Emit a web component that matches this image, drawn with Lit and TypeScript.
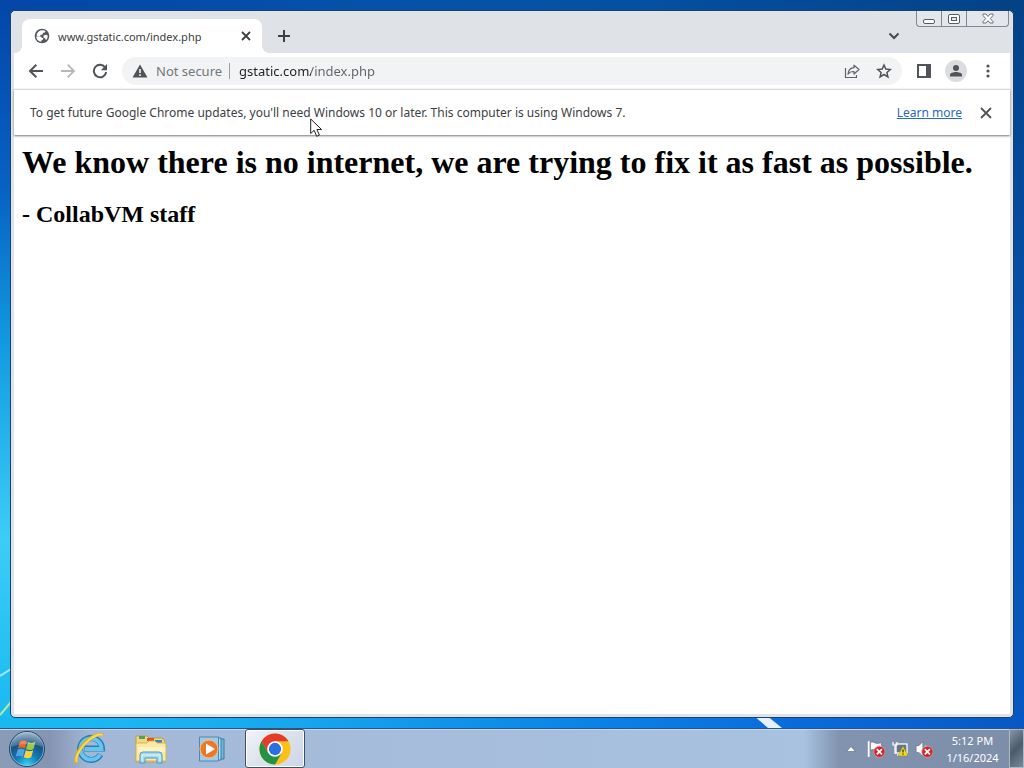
import { LitElement, html, css, svg } from "lit";
import { customElement } from "lit/decorators.js";

@customElement("browser-window")
class BrowserWindow extends LitElement {
  static styles = css`
    :host { flex: 1; display: flex; flex-direction: column; min-height: 0; box-sizing: border-box;
      background: #dfe3e8; border: 1px solid #17436f; border-radius: 5px; padding: 0 3px 3px;
      font-family: "Noto Sans", "Open Sans", sans-serif; color: #3c4043; }
    * { box-sizing: border-box; }
    svg { display: block; flex: none; }
    button { border: 0; padding: 0; margin: 0; background: none; color: #505357; display: grid; place-items: center; flex: none; }
    .strip { display: flex; height: 42px; background: #dfe2e7; padding-left: 8px; }
    .tab { align-self: flex-end; width: 240px; height: 34px; display: flex; align-items: center; gap: 8px;
      padding: 0 8px 0 12px; background: #fff; border-radius: 8px 8px 0 0; font-size: 11px; position: relative; }
    .tab::before, .tab::after { content: ""; position: absolute; bottom: 0; width: 8px; height: 8px; }
    .tab::before { left: -8px; background: radial-gradient(circle at 0 0, #dfe2e7 8px, #fff 8px); }
    .tab::after { right: -8px; background: radial-gradient(circle at 100% 0, #dfe2e7 8px, #fff 8px); }
    .title { flex: 1; white-space: nowrap; }
    .new { width: 28px; height: 28px; margin: 11px 0 0 8px; }
    .list { width: 24px; height: 24px; margin: 13px 10px 0 auto; }
    .caption { display: flex; height: 16px; margin-right: 1px; border: 1px solid #83888f; border-top: 0; border-radius: 0 0 4px 4px; background: #e3e6ea; }
    .caption button { height: 15px; width: 25px; border-right: 1px solid #83888f; }
    .caption button:last-child { width: 41px; border: 0; }
    .toolbar { display: flex; align-items: center; height: 36px; background: #fff; padding: 0 6px; }
    .tool { width: 32px; height: 32px; }
    .omni { flex: 1; display: flex; align-items: center; height: 28px; margin: 0 6px; border-radius: 14px; background: #f1f3f4; padding: 0 2px 0 10px; font-size: 13px; color: #5f6368; }
    .secure { margin-left: 8px; white-space: nowrap; color: #74777b; }
    .rule { width: 1px; height: 16px; background: #9aa0a6; margin: 0 9px 0 7px; }
    .url { flex: 1; min-width: 0; border: 0; padding: 0; outline: 0; font: inherit; color: transparent;
      background: linear-gradient(90deg, #202124 72px, #5f6368 72px); -webkit-background-clip: text; background-clip: text; }
    .avatar { width: 22px; height: 22px; border-radius: 50%; background: #dadce0; }
    .info { display: flex; align-items: center; height: 46px; background: #fff; border-top: 1px solid #d5d7da; padding: 0 13px 0 16px; font-size: 12px;
      box-shadow: 0 1px 2px #777; z-index: 1; flex: none; }
    .info a { margin-left: auto; margin-right: 13px; color: #2a69c4; }
    .page { flex: 1; background: #fff; padding: 9px 8px; color: #000; font-family: "Liberation Serif", serif; }
    h1 { font-size: 32px; line-height: 36px; margin: 0 0 20px; }
    h2 { font-size: 24px; line-height: 28px; margin: 0; }
  `;
  render() {
    return html`
      <div class="strip">
        <div class="tab">
          <svg width="16" height="16" viewBox="0 0 16 16"><circle cx="8" cy="8" r="7.3" fill="#54585c"/><path d="M8.300 2.200c1.500 0 2.400.4 3.200 1l-.6 1.300-1.700.3-.7 1.600-2 .5-.8 1.500-2.100.2-1-1.500C3 4.300 5.200 2.200 8.300 2.200z" fill="#fff"/><path d="M2.200 8.500h4.500l1 1.300 1.700.4-.6 1.500-1.300.4v1.500C4.700 13.500 2.400 11.500 2.200 8.500z" fill="#fff"/><path d="M9.500 7.500 12 6.800l1.700.8c.1 2-.6 3.600-1.700 4.600l-.8-1.800-1.700-.8z" fill="#fff"/></svg>
          <span class="title">www.gstatic.com/index.php</span>
          <button aria-label="Close tab"><svg width="16" height="16" viewBox="0 0 16 16"><path d="m4 4 8 8m0-8-8 8" stroke="#3c4043" stroke-width="1.800"/></svg></button>
        </div>
        <button class="new" aria-label="New tab"><svg width="14" height="14" viewBox="0 0 14 14"><path d="M7 1v12M1 7h12" stroke="#3c4043" stroke-width="2"/></svg></button>
        <button class="list" aria-label="Search tabs"><svg width="12" height="8" viewBox="0 0 12 8"><path d="m1.500 1.500 4.500 4.500 4.500-4.500" fill="none" stroke="#46494d" stroke-width="2"/></svg></button>
        <div class="caption">
          <button aria-label="Minimize"><svg width="14" height="13" viewBox="0 0 14 13"><rect x="1.500" y="7.500" width="11" height="4" rx="1.500" fill="#fff" stroke="#575c64"/></svg></button>
          <button aria-label="Maximize"><svg width="14" height="13" viewBox="0 0 14 13"><rect x="1.500" y="2.500" width="11" height="9" rx="1.500" fill="#fff" stroke="#575c64"/><rect x="4.500" y="5.500" width="5" height="3" fill="#e3e6ea" stroke="#575c64"/></svg></button>
          <button aria-label="Close"><svg width="14" height="13" viewBox="0 0 14 13"><path d="M2 2h3l2 2.500L9 2h3v1.500L9.300 6.500 12 9.700V11H9L7 8.700 5 11H2V9.700l2.700-3.200L2 3.500z" fill="#fff" stroke="#6a6e75"/></svg></button>
        </div>
      </div>
      <div class="toolbar">
        <button class="tool" aria-label="Back"><svg width="16" height="16" viewBox="0 0 16 16"><path d="M15 8H2m6.300-6.300L2 8l6.300 6.300" fill="none" stroke="#505357" stroke-width="2"/></svg></button>
        <button class="tool" aria-label="Forward"><svg width="16" height="16" viewBox="0 0 16 16"><path d="M1 8h13M7.700 1.700 14 8l-6.300 6.300" fill="none" stroke="#b6b8bb" stroke-width="1.800"/></svg></button>
        <button class="tool" aria-label="Reload"><svg width="16" height="16" viewBox="0 0 16 16"><path d="M13.300 4.700A6.200 6.200 0 1 0 14.200 9" fill="none" stroke="#505357" stroke-width="2"/><path d="M15 1v6.200H8.800z" fill="#505357"/></svg></button>
        <div class="omni">
          <svg width="16" height="16" viewBox="0 0 16 16"><path d="M8 1.500 15.500 14.500H.500z" fill="#505357"/><path d="M8 6v4m0 1.300v1.700" stroke="#f1f3f4" stroke-width="1.600"/></svg>
          <label class="secure" for="url">Not secure</label><span class="rule"></span>
          <input class="url" id="url" type="text" value="gstatic.com/index.php">
          <button class="tool" aria-label="Share"><svg width="16" height="16" viewBox="0 0 16 16"><path d="M1.500 5v9.500h11V12" fill="none" stroke="#606468" stroke-width="1.200"/><path d="M10 2.200 15 6.500 10 11V8.500C7.200 8.400 5.400 9.300 4 11.200 4.300 7.800 6.300 5 10 4.700z" fill="none" stroke="#606468" stroke-width="1.200" stroke-linejoin="round"/></svg></button>
          <button class="tool" aria-label="Bookmark this page"><svg width="16" height="16" viewBox="0 0 16 16"><path d="m8 2 1.800 4.100 4.500.4-3.400 3 1 4.400L8 11.500 4.100 13.900l1-4.400-3.400-3 4.500-.4z" fill="none" stroke="#505357" stroke-width="1.500"/></svg></button>
        </div>
        <button class="tool" aria-label="Side panel"><svg width="16" height="16" viewBox="0 0 16 16"><path d="M1 1h14v14H1zM3 3v10h7V3z" fill-rule="evenodd" fill="#505357"/></svg></button>
        <button class="tool" aria-label="Profile"><span class="avatar"><svg width="22" height="22" viewBox="0 0 22 22"><circle cx="11" cy="8" r="3" fill="#505357"/><path d="M5 16.500v-1.700C5 13 8.500 12 11 12s6 1 6 2.800v1.700z" fill="#505357"/></svg></span></button>
        <button class="tool" aria-label="Menu"><svg width="16" height="16" viewBox="0 0 16 16" fill="#505357"><circle cx="8" cy="3" r="1.600"/><circle cx="8" cy="8" r="1.600"/><circle cx="8" cy="13" r="1.600"/></svg></button>
      </div>
      <div class="info">
        <span>To get future Google Chrome updates, you'll need Windows 10 or later. This computer is using Windows 7.</span>
        <a href="#">Learn more</a>
        <button aria-label="Dismiss"><svg width="22" height="22" viewBox="0 0 22 22"><path d="m6 6 10 10m0-10L6 16" stroke="#505357" stroke-width="1.800"/></svg></button>
      </div>
      <div class="page">
        <h1>We know there is no internet, we are trying to fix it as fast as possible.</h1>
        <h2>- CollabVM staff</h2>
      </div>`;
  }
}

const badge = svg`<circle cx="11" cy="10.500" r="5" fill="#d2262b" stroke="#e9a5a5" stroke-width=".6"/><path d="m8.700 8.200 4.600 4.600m0-4.600-4.600 4.600" stroke="#fff" stroke-width="1.600"/>`;

@customElement("task-bar")
class TaskBar extends LitElement {
  static styles = css`
    :host { flex: none; display: flex; align-items: stretch; height: 40px; box-sizing: border-box; border-top: 1px solid #27558c;
      box-shadow: inset 0 1px #c4d6ec;
      background: linear-gradient(90deg, #8b9cb8 0, #8494b2 50px, #a3b8d6 90px, #a5bbda 300px, #a8c2e0 calc(100% - 220px), #8193af calc(100% - 185px), #7e8ea9);
      font-family: "Noto Sans", "Open Sans", sans-serif; }
    * { box-sizing: border-box; }
    button { border: 0; padding: 0; background: none; display: grid; place-items: center; flex: none; font: inherit; color: #fff; }
    svg { display: block; }
    .start { width: 54px; }
    .apps { display: flex; margin-left: 6px; }
    .app { width: 60px; margin-right: 1px; }
    .app.on { margin-left: 2px; border: 1px solid #3d4f68; border-radius: 3px; box-shadow: inset 0 0 0 1px #fff; background: linear-gradient(135deg, #f2f4f8, #dde3ee 45%, #cdd6e6); }
    .tray { margin-left: auto; display: flex; align-items: center; }
    .up { width: 26px; height: 24px; }
    .icon { width: 24px; height: 24px; }
    .clock { width: 73px; height: 38px; font-size: 11px; line-height: 17px; text-align: center; }
    .show { align-self: stretch; width: 15px; border: 1px solid #a9b7c9; background: linear-gradient(135deg, #8694a6, #4c5b6c 50%, #79899b); }
  `;
  render() {
    return html`
      <button class="start" aria-label="Start"><svg width="38" height="38" viewBox="0 0 38 38">
        <defs><radialGradient id="orb" cx=".5" cy=".95" r=".95"><stop offset="0" stop-color="#35d1fa"/><stop offset=".35" stop-color="#127cb4"/><stop offset=".7" stop-color="#174f80"/><stop offset="1" stop-color="#8eafcb"/></radialGradient></defs>
        <circle cx="19" cy="19" r="17.500" fill="url(#orb)" stroke="#29475f"/><circle cx="19" cy="19" r="16.500" fill="none" stroke="#a8c7dd" stroke-opacity=".7"/>
        <path d="M12 11.500c2.500-1.500 4.800-1.300 7 0l-2 7c-2.300-1.300-4.500-1.400-7 0z" fill="#ee6529"/><path d="M20 12c2.500 1.300 4.800 1.300 7.500-.2l-2 7.200c-2.500 1.300-5 1.300-7.500 0z" fill="#9bcb43"/><path d="M9.700 19.700c2.400-1.300 4.700-1.200 7 .1l-2 7c-2.300-1.300-4.600-1.300-7 0z" fill="#4fa7e2"/><path d="M17.800 20.300c2.500 1.300 4.900 1.200 7.400 0l-2 7c-2.500 1.300-4.900 1.300-7.400 0z" fill="#fbd13d"/>
        <path d="M4 17a15 15 0 0 1 30 0c-7-4-23-4-30 0z" fill="#fff" opacity=".22"/></svg></button>
      <div class="apps">
        <button class="app" aria-label="Internet Explorer"><svg width="32" height="34" viewBox="0 0 32 34"><path d="M26.500 22.500A11 11 0 1 1 28 16.500H10.500" fill="none" stroke="#287eb7" stroke-width="6"/><path d="M26 22.500A10.500 10.500 0 1 1 27.500 17H11" fill="none" stroke="#65c5ee" stroke-width="4"/><path d="M3 31C-1 27 6 14 15 7.500 21 3 27 1 28.500 3.500" fill="none" stroke="#dcae23" stroke-width="3.500"/><path d="M3 30C0 26 7 14 15.500 7.500 21 3.500 26 2 28.500 3" fill="none" stroke="#f8db55" stroke-width="2"/></svg></button>
        <button class="app" aria-label="Windows Explorer"><svg width="34" height="32" viewBox="0 0 34 32"><path d="M2 7V3h11l2 2h13l3 3v21H2z" fill="#f3d77f" stroke="#c29d47"/><path d="M5 3h6v3H5z" fill="#4da657"/><path d="M13 5h7v3h-7z" fill="#d8552f"/><path d="M21 7h7v3h-7z" fill="#3c86bd"/><path d="M2 10h11l2-2h6l2 2h9v18H2z" fill="#fae9a5" stroke="#d1b560"/><path d="M4 14h27v5H4z" fill="#fff3bf"/><path d="M6 30V22q0-3 3-3h16q3 0 3 3v8h-5v-5H11v5z" fill="#a6daf1" stroke="#4b99c4"/><path d="M8 28v-6h18v6" fill="none" stroke="#e5f7fd"/></svg></button>
        <button class="app" aria-label="Windows Media Player"><svg width="28" height="28" viewBox="0 0 28 28"><path d="M7 4h19v20H7z" fill="#76b6dc" stroke="#327eaa"/><path d="M4 3h19v22H4z" fill="#b4daed" stroke="#327eaa"/><path d="M1.500 2h19v24h-19z" fill="#9fcbe5" stroke="#4c89b1"/><circle cx="11" cy="14" r="9" fill="#e9782b" stroke="#f9bd8a"/><path d="M8 8.500 17 14l-9 5.500z" fill="#fff"/></svg></button>
        <button class="app on" aria-label="Google Chrome"><svg width="34" height="34" viewBox="0 0 48 48"><circle cx="24" cy="24" r="22" fill="#fbc116"/><path d="M24 13h19.050A22 22 0 0 0 4.950 13l9.520 16.500z" fill="#e33b2e"/><path d="M33.530 29.500 24 46A22 22 0 0 1 4.950 13l9.520 16.500z" fill="#229342"/><circle cx="24" cy="24" r="11" fill="#fff"/><circle cx="24" cy="24" r="8.700" fill="#2a6fe0"/></svg></button>
      </div>
      <div class="tray">
        <button class="up" aria-label="Show hidden icons"><svg width="10" height="6" viewBox="0 0 10 6"><path d="M5 .500 9.500 5.500H.500z" fill="#fff" stroke="#64748c" stroke-width=".7"/></svg></button>
        <button class="icon" aria-label="Action Center"><svg width="18" height="18" viewBox="0 0 16 16"><path d="M1.500 1v14" stroke="#fff" stroke-width="1.600"/><path d="M3 2c3-1 4 1 6 1s3-.5 4-.5V9C10 10 8 7.500 3 9z" fill="#f6f8fa" stroke="#4b5a70" stroke-width=".5"/>${badge}</svg></button>
        <button class="icon" aria-label="Network"><svg width="16" height="16" viewBox="0 0 16 16"><rect x="4" y="3" width="11" height="9" fill="#65758c" stroke="#fff" stroke-width="1.300"/><path d="M5 14h8" stroke="#fff" stroke-width="1.500"/><path d="M1 1v3h4V1M3 4v9" fill="none" stroke="#fff" stroke-width="1.200"/><path d="m11 5 5 10H6z" fill="#f4dc24" stroke="#8f8115" stroke-width=".5"/><path d="M11 8.500v3m0 1v1.200" stroke="#222" stroke-width="1.200"/></svg></button>
        <button class="icon" aria-label="Volume, muted"><svg width="18" height="18" viewBox="0 0 16 16"><path d="M1 5h2.500L7 1.500v13L3.500 11H1z" fill="#fff" stroke="#536176" stroke-width=".5"/><path d="M9 5q1.500 3 0 6" stroke="#fff" fill="none"/>${badge}</svg></button>
        <button class="clock">5:12 PM<br>1/16/2024</button>
        <button class="show" aria-label="Show desktop"></button>
      </div>`;
  }
}

@customElement("app-root")
class AppRoot extends LitElement {
  static styles = css`
    :host { display: flex; flex-direction: column; height: 100vh; overflow: hidden;
      background: linear-gradient(90deg, #18b8f0 0, #1cb6f2 12%, #16a5ee 30%, #0a80e4 60%, #0a6ddc 76%, #0758c4) 0 100% / 100% 52px no-repeat,
        linear-gradient(90deg, #0346a8, #0553a8 40%, #0451a4 60%, #044286) 0 0 / 100% 12px no-repeat,
        linear-gradient(180deg, #044286, #0553b0 50%, #0758c4) 100% 0 / 50% 100% no-repeat,
        linear-gradient(180deg, #0346a8, #0762c4 25%, #129be0 45%, #3ccdf6 70%, #18b8f0 95%); }
    .desk { flex: 1; min-height: 0; display: flex; padding: 10px 10px 10px 10px; position: relative; }
    .rays { position: absolute; inset: auto 0 0 0; width: 100%; height: 60px; }
    browser-window { position: relative; }
    .pointer { position: absolute; left: 310px; top: 118px; z-index: 2; }
  `;
  render() {
    return html`
      <div class="desk">
        <svg class="rays" preserveAspectRatio="none" viewBox="0 0 1024 60"><path d="M753 47h13l16 13h-14z" fill="#fff" opacity=".9"/><path d="M0 8 11 1" stroke="#a8e8fb" stroke-width="2"/><path d="M0 47 11 34" stroke="#b5e8a6" stroke-width="2"/></svg>
        <browser-window></browser-window>
        <svg class="pointer" width="13" height="20" viewBox="0 0 13 20"><path d="M.700 1v14.500l3.500-3.200 2.500 6 2.700-1.200-2.500-5.600h4.700z" fill="#fff" stroke="#222"/></svg>
      </div>
      <task-bar></task-bar>`;
  }
}
